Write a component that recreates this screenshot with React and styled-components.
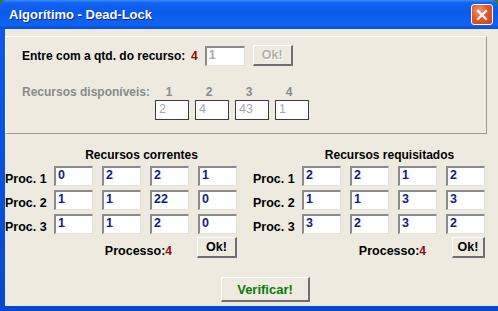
import React from 'react';
import styled, { createGlobalStyle } from 'styled-components';

const GlobalStyle = createGlobalStyle`
  html, body {
    margin: 0;
    padding: 0;
    width: 498px;
    height: 311px;
    overflow: hidden;
    background: #3a7a2a;
  }
  * { box-sizing: border-box; }
`;

const Window = styled.div`
  width: 498px;
  height: 311px;
  display: flex;
  flex-direction: column;
  font-family: "Liberation Sans", Arial, sans-serif;
`;

const TitleBar = styled.div`
  height: 29px;
  flex: none;
  display: flex;
  align-items: center;
  justify-content: space-between;
  padding: 0 5px 0 9px;
  border-radius: 7px 7px 0 0;
  background: linear-gradient(180deg, #3d8dff 0%, #1162f2 10%, #0a5bec 45%, #0f63f4 85%, #074ed2 100%);
`;

const Title = styled.span`
  color: #fff;
  font-weight: bold;
  font-size: 13px;
  text-shadow: 1px 1px 0 #0c2a8a;
`;

const CloseBtn = styled.div`
  width: 22px;
  height: 21px;
  border: 1px solid #fff;
  border-radius: 3px;
  background: radial-gradient(circle at 35% 30%, #f39a7a 0%, #e2572c 45%, #c8401a 100%);
  display: flex;
  align-items: center;
  justify-content: center;
`;

const Frame = styled.div`
  flex: 1;
  display: flex;
  padding: 0 0 5px 5px;
  background: linear-gradient(180deg, #0b5ce8 0%, #0548d0 100%);
`;

const Body = styled.div`
  flex: 1;
  background: #eeeae0;
  padding-top: 7px;
  display: flex;
  flex-direction: column;
`;

const TopPanel = styled.div`
  width: 482px;
  height: 98px;
  border-top: 1px solid #fff;
  border-left: 1px solid #fff;
  border-right: 1px solid #9c9a92;
  border-bottom: 1px solid #9c9a92;
  padding: 8px 0 0 16px;
`;

const Row = styled.div`
  display: flex;
  align-items: center;
  height: 21px;
`;

const Label = styled.span`
  flex: none;
  width: ${p => p.$w || 'auto'};
  font-weight: bold;
  font-size: 12px;
  color: ${p => (p.$muted ? '#8a8a8a' : '#000')};
  white-space: nowrap;
`;

const Red = styled.span`
  color: #8e0b0b;
  font-weight: bold;
  font-size: 12px;
`;

const Field = styled.div`
  flex: none;
  width: ${p => p.$w || 39}px;
  height: ${p => p.$h || 20}px;
  background: #fff;
  border-top: 2px solid #8a8a8a;
  border-left: 2px solid #8a8a8a;
  border-right: 1px solid #e4e2d8;
  border-bottom: 1px solid #e4e2d8;
  padding: 0 0 0 2px;
  font-size: 12.5px;
  font-weight: bold;
  line-height: 14px;
  color: ${p => (p.$disabled ? '#a8a8a8' : '#0c1e8c')};
  margin-left: ${p => p.$ml || 0}px;
`;

const FlatField = styled.div`
  width: 34px;
  height: 20px;
  border: 1px solid #3c3c3c;
  background: #fff;
  padding-left: 3px;
  font-size: 12.5px;
  line-height: 17px;
  color: #a8a8a8;
`;

const Button = styled.div`
  flex: none;
  width: ${p => p.$w || 40}px;
  height: ${p => p.$h || 21}px;
  margin-left: ${p => p.$ml || 0}px;
  border-top: 1px solid #fff;
  border-left: 1px solid #fff;
  border-right: 2px solid #6e6e6e;
  border-bottom: 2px solid #6e6e6e;
  background: #eeeae0;
  display: flex;
  align-items: center;
  justify-content: center;
  font-weight: bold;
  font-size: ${p => p.$fs || 12.5}px;
  color: ${p => p.$color || '#000'};
  text-shadow: ${p => (p.$disabled ? '1px 1px 0 #fff' : 'none')};
`;

const DispGrid = styled.div`
  margin-top: 18px;
  display: grid;
  grid-template-columns: 127px repeat(4, 34px);
  grid-template-rows: 15px 20px;
  column-gap: 6px;
  row-gap: 1px;
  align-items: center;
`;

const ColNum = styled.span`
  font-weight: bold;
  font-size: 12px;
  color: #8a8a8a;
  text-align: center;
  padding-right: 6px;
`;

const Matrices = styled.div`
  display: flex;
  gap: 16px;
  padding-top: 14px;
`;

const Matrix = styled.div`
  display: grid;
  grid-template-columns: 40px repeat(4, 39px);
  grid-template-rows: 14px repeat(3, 20px) auto;
  column-gap: ${p => p.$gap}px;
  row-gap: 4px;
`;

const Heading = styled.div`
  grid-column: 2 / -1;
  justify-self: center;
  margin-right: 8px;
  font-weight: bold;
  font-size: 12px;
  line-height: 14px;
  white-space: nowrap;
`;

const ProcLabel = styled.span`
  align-self: end;
  font-weight: bold;
  font-size: 12.5px;
  line-height: 13px;
  white-space: nowrap;
`;

const MatrixFooter = styled.div`
  grid-column: 1 / -1;
  display: flex;
  justify-content: flex-end;
  align-items: flex-end;
  gap: ${p => p.$gap}px;
  margin-top: -1px;
`;

const Processo = styled.span`
  font-weight: bold;
  font-size: 12.5px;
  line-height: 14px;
`;

const VerifyRow = styled.div`
  padding: 19px 0 0 216px;
`;

const matCorrentes = [
  ['0', '2', '2', '1'],
  ['1', '1', '22', '0'],
  ['1', '1', '2', '0'],
];

const matRequisitados = [
  ['2', '2', '1', '2'],
  ['1', '1', '3', '3'],
  ['3', '2', '3', '2'],
];

function MatrixBlock({ title, data, gap, btnW, footGap }) {
  return (
    <Matrix $gap={gap}>
      <Heading>{title}</Heading>
      {data.map((row, i) => (
        <React.Fragment key={i}>
          <ProcLabel>Proc. {i + 1}</ProcLabel>
          {row.map((v, j) => (
            <Field key={j}>{v}</Field>
          ))}
        </React.Fragment>
      ))}
      <MatrixFooter $gap={footGap}>
        <Processo>
          Processo:<Red>4</Red>
        </Processo>
        <Button $w={btnW}>Ok!</Button>
      </MatrixFooter>
    </Matrix>
  );
}

export default function App() {
  return (
    <>
      <GlobalStyle />
      <Window>
        <TitleBar>
          <Title>Algorítimo - Dead-Lock</Title>
          <CloseBtn>
            <svg width="12" height="12" viewBox="0 0 12 12">
              <path d="M2 2 L10 10 M10 2 L2 10" stroke="#fff" strokeWidth="2.2" strokeLinecap="square" />
            </svg>
          </CloseBtn>
        </TitleBar>
        <Frame>
          <Body>
            <TopPanel>
              <Row>
                <Label $w="169px">Entre com a qtd. do recurso:</Label>
                <Red>4</Red>
                <Field $w={40} $h={20} $ml={7} $disabled>1</Field>
                <Button $ml={8} $color="#b0aea6" $disabled>Ok!</Button>
              </Row>
              <DispGrid>
                <Label $muted>Recursos disponíveis:</Label>
                <ColNum>1</ColNum>
                <ColNum>2</ColNum>
                <ColNum>3</ColNum>
                <ColNum>4</ColNum>
                <span />
                <FlatField>2</FlatField>
                <FlatField>4</FlatField>
                <FlatField>43</FlatField>
                <FlatField>1</FlatField>
              </DispGrid>
            </TopPanel>
            <Matrices>
              <MatrixBlock title="Recursos correntes" data={matCorrentes} gap={9} btnW={40} footGap={25} />
              <MatrixBlock title="Recursos requisitados" data={matRequisitados} gap={9} btnW={33} footGap={26} />
            </Matrices>
            <VerifyRow>
              <Button $w={89} $h={25} $color="#0a7a0a" $fs={13}>Verificar!</Button>
            </VerifyRow>
          </Body>
        </Frame>
      </Window>
    </>
  );
}
